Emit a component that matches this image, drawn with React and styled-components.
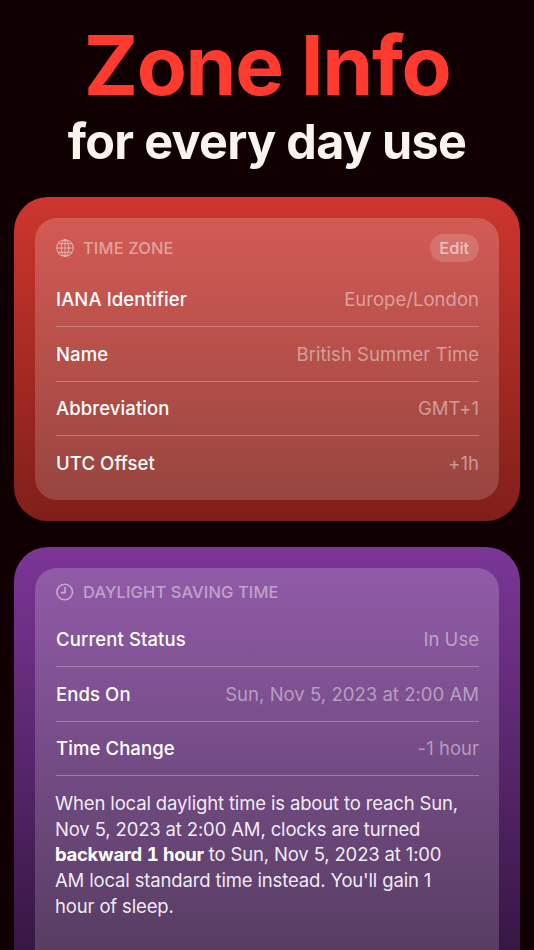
import React from "react";
import styled, { createGlobalStyle } from "styled-components";

const Global = createGlobalStyle`
  html, body { margin: 0; padding: 0; background: #110002; }
  body { font-family: Inter, "Liberation Sans", sans-serif; -webkit-font-smoothing: antialiased; }
`;
const Page = styled.div`
  width: 534px; height: 950px; overflow: hidden; background: #110002;
  display: flex; flex-direction: column; align-items: center;
`;
const Title = styled.h1`
  margin: 20px 0 0; font-size: 82px; line-height: 92px; font-weight: 700;
  letter-spacing: -1.4px; color: #ff3b30; white-space: nowrap;
`;
const Subtitle = styled.h2`
  margin: 0 0 25px; font-size: 48.5px; line-height: 60px; font-weight: 700;
  letter-spacing: -.7px; color: #f9f4ec; white-space: nowrap;
`;
const Outer = styled.section`
  width: 506px; box-sizing: border-box; flex: none;
  padding: 21px 21px; border-radius: 34px;
  margin-bottom: 26px;
  background: linear-gradient(180deg, ${p => p.$from}, ${p => p.$to});
`;
const Inner = styled.div`
  border-radius: 22px; padding: 0 20px ${p => p.$pad}px 21px;
  background: linear-gradient(180deg, rgba(255,255,255,.19), rgba(255,255,255,.16));
  color: #fff;
`;
const Header = styled.header`
  box-sizing: border-box; height: ${p => p.$h}px; padding-top: ${p => p.$top}px;
  display: flex; align-items: flex-start; gap: 9px;
`;
const HeaderTitle = styled.span`
  flex: 1; font-size: 16.5px; line-height: 28px; font-weight: 500; letter-spacing: .1px;
  color: rgba(255,255,255,.45); text-transform: uppercase;
`;
const Edit = styled.button`
  border: 0; height: 28px; width: 49.5px; padding: 0; border-radius: 14px;
  font: 500 16.5px Inter, sans-serif; color: rgba(255,255,255,.58);
  background: rgba(255,255,255,.16);
`;
const Icon = styled.svg`
  width: 18px; height: 18px; flex: none; fill: none; margin-top: 5px;
  stroke: rgba(255,255,255,.5); stroke-width: 1.6;
`;
const Row = styled.div`
  height: 54.5px; box-sizing: border-box; display: flex; align-items: center;
  justify-content: space-between;
  border-bottom: ${p => p.$last ? "none" : "1px solid rgba(255,255,255,.28)"};
`;
const Label = styled.span`
  font-size: 18.5px; font-weight: 500; letter-spacing: .1px; color: #fff;
`;
const Value = styled.span`
  font-size: 18.5px; font-weight: 400; letter-spacing: .03px; color: rgba(255,255,255,.45);
`;
const Note = styled.p`
  margin: 15px 0 0 -1px; max-width: 410px; font-size: 18.5px; line-height: 25.7px; letter-spacing: -.15px;
  color: rgba(255,255,255,.92);
  strong { font-weight: 700; color: #fff; font-variant-numeric: tabular-nums; letter-spacing: -.3px; }
`;

const tz = [
  ["IANA Identifier", "Europe/London"],
  ["Name", "British Summer Time"],
  ["Abbreviation", "GMT+1"],
  ["UTC Offset", "+1h"],
];
const dst = [
  ["Current Status", "In Use"],
  ["Ends On", "Sun, Nov 5, 2023 at 2:00 AM"],
  ["Time Change", "-1 hour"],
];

const Globe = () => (
  <Icon viewBox="0 0 18 18" style={{ strokeWidth: 1.05 }}>
    <circle cx="9" cy="9" r="8.3" />
    <ellipse cx="9" cy="9" rx="3.8" ry="8.3" />
    <path d="M9 .7v16.6M.7 9h16.6M2 4.8h14M2 13.2h14" />
  </Icon>
);
const Clock = () => (
  <Icon viewBox="0 0 18 18">
    <circle cx="8.7" cy="9" r="7.8" />
    <path d="M9 4v5.6H4.8" />
  </Icon>
);

export default function App() {
  return (
    <Page>
      <Global />
      <Title>Zone Info</Title>
      <Subtitle>for every day use</Subtitle>
      <Outer $from="#cd362e" $to="#7f1f19">
        <Inner $pad={9.5}>
          <Header $h={54.5} $top={16}>
            <Globe />
            <HeaderTitle>Time Zone</HeaderTitle>
            <Edit>Edit</Edit>
          </Header>
          {tz.map(([l, v], i) => (
            <Row key={l} $last={i === tz.length - 1}><Label>{l}</Label><Value>{v}</Value></Row>
          ))}
        </Inner>
      </Outer>
      <Outer $from="#7b3697" $to="#2e1339">
        <Inner $pad={62}>
          <Header $h={44.5} $top={10}>
            <Clock />
            <HeaderTitle>Daylight Saving Time</HeaderTitle>
          </Header>
          {dst.map(([l, v]) => (
            <Row key={l}><Label>{l}</Label><Value>{v}</Value></Row>
          ))}
          <Note>
            When local daylight time is about to reach Sun, Nov 5, 2023 at 2:00 AM, clocks are turned{" "}
            <strong>backward 1 hour</strong> to Sun, Nov 5, 2023 at 1:00 AM local standard time instead. You'll gain 1 hour of sleep.
          </Note>
        </Inner>
      </Outer>
    </Page>
  );
}
